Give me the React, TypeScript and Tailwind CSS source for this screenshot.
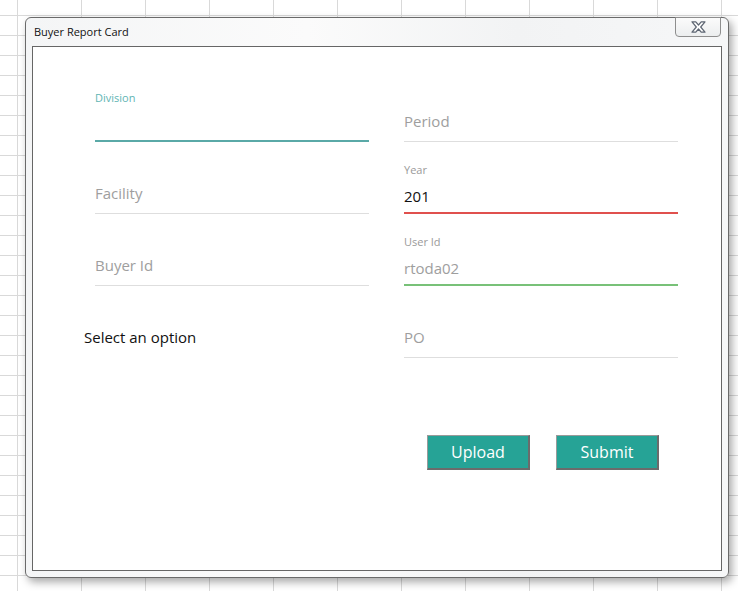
import React from "react";

type FieldProps = {
  label?: string;
  value?: string;
  placeholder?: string;
  tone?: "idle" | "focus" | "error" | "ok";
  valueDark?: boolean;
};

function Field({ label, value, placeholder, tone = "idle", valueDark }: FieldProps) {
  const line =
    tone === "focus"
      ? "border-b-2 border-[#5aa9a7]"
      : tone === "error"
      ? "border-b-2 border-[#e0504d]"
      : tone === "ok"
      ? "border-b-2 border-[#78c178]"
      : "border-b border-[#dedede]";
  const labelColor = tone === "focus" ? "text-[#5fb5b4]" : "text-[#9a9a9a]";
  // fields holding a value sit a little lower than bare placeholders
  const spacing =
    tone === "idle" ? "mt-[4px] mb-[8px]" : tone === "focus" ? "mt-[4px] mb-[7px]" : "mt-[7px] mb-[4px]";

  return (
    <div className={`flex h-[72px] flex-col justify-end ${line}`}>
      {label && <div className={`text-[11px] leading-[14px] ${labelColor}`}>{label}</div>}
      <div
        className={`h-[24px] text-[15px] leading-[24px] ${spacing} ${
          valueDark ? "text-[#111]" : "text-[#9e9e9e]"
        }`}
      >
        {value ?? placeholder ?? ""}
      </div>
    </div>
  );
}

export default function App() {
  return (
    <div
      className="min-h-[591px] w-[738px] overflow-hidden bg-white bg-[linear-gradient(to_right,#d9d9d9_1px,transparent_1px),linear-gradient(to_bottom,#d9d9d9_1px,transparent_1px)] bg-[size:64px_20px] bg-[position:17px_15px] pt-[17px] pl-[25px]"
      style={{ fontFamily: '"Open Sans", "Noto Sans", sans-serif' }}
    >
      {/* Dialog window */}
      <div className="relative flex h-[561px] w-[704px] flex-col rounded-[6px] border border-[#6a6a6a] bg-[linear-gradient(to_right,#f4f5f6,#fbfbfb_40%,#f2f3f4_70%,#f6f7f8)] px-[6px] pb-[6px] shadow-[3px_4px_8px_rgba(0,0,0,0.35)]">
        <div className="flex h-[28px] items-center pl-[2px] text-[11px] text-[#111]">Buyer Report Card</div>

        {/* Close button */}
        <div className="absolute top-[-1px] right-[7px] flex h-[20px] w-[46px] items-center justify-center rounded-b-[4px] border border-[#8e8e8e] bg-[linear-gradient(to_bottom,#fbfbfb,#eceeef)]">
          <svg width="15" height="12" viewBox="0 0 15 12">
            <path
              d="M1 0.8h3.8L7.5 4l2.7-3.2H14L9.7 6l4.3 5.2h-3.8L7.5 8l-2.7 3.2H1L5.3 6z"
              fill="#fff"
              stroke="#5e6673"
              strokeWidth="1.2"
              strokeLinejoin="round"
            />
          </svg>
        </div>

        {/* Content panel */}
        <div className="flex-1 border border-[#666] bg-white pt-[23px] pl-[62px]">
          <div className="grid grid-cols-[274px_274px] gap-x-[35px]">
            <div className="flex flex-col">
              <Field label="Division" tone="focus" />
              <Field placeholder="Facility" />
              <Field placeholder="Buyer Id" />
              <div className="ml-[-11px] flex h-[72px] items-end pb-[9px] text-[15px] leading-[24px] text-[#111]">
                Select an option
              </div>
            </div>
            <div className="flex flex-col">
              <Field placeholder="Period" />
              <Field label="Year" value="201" tone="error" valueDark />
              <Field label="User Id" value="rtoda02" tone="ok" />
              <Field placeholder="PO" />
              <div className="mt-[77px] flex gap-[26px] pl-[23px]">
                <button className="h-[35px] w-[103px] border border-[#9a9a9a] border-r-2 border-b-2 border-r-[#6b6b6b] border-b-[#6b6b6b] bg-[#26a396] text-[16px] font-medium text-white">
                  Upload
                </button>
                <button className="h-[35px] w-[103px] border border-[#9a9a9a] border-r-2 border-b-2 border-r-[#6b6b6b] border-b-[#6b6b6b] bg-[#26a396] text-[16px] font-medium text-white">
                  Submit
                </button>
              </div>
            </div>
          </div>
        </div>
      </div>
    </div>
  );
}
